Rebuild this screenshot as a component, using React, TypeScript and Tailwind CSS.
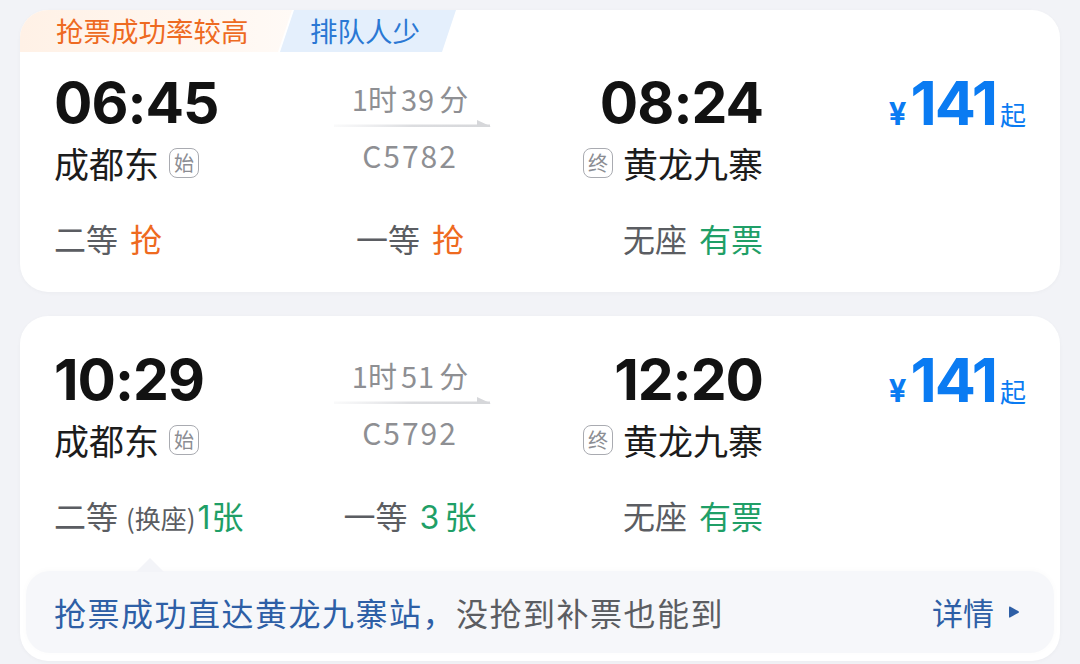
import React from 'react';

const CJK = "font-['Noto_Sans_CJK_SC',_'Noto_Sans',_sans-serif]";
const NUM = "font-['Inter',_'Noto_Sans_CJK_SC',_sans-serif]";

type Seat = { label: string; note?: string; num?: string; value: string; tone: 'orange' | 'green' };

type Train = {
  depart: string;
  arrive: string;
  from: string;
  to: string;
  duration: [string, string];
  code: string;
  price: string;
  seats: Seat[];
};

const TRAINS: Train[] = [
  {
    depart: '06:45',
    arrive: '08:24',
    from: '成都东',
    to: '黄龙九寨',
    duration: ['1', '39'],
    code: 'C5782',
    price: '141',
    seats: [
      { label: '二等', value: '抢', tone: 'orange' },
      { label: '一等', value: '抢', tone: 'orange' },
      { label: '无座', value: '有票', tone: 'green' },
    ],
  },
  {
    depart: '10:29',
    arrive: '12:20',
    from: '成都东',
    to: '黄龙九寨',
    duration: ['1', '51'],
    code: 'C5792',
    price: '141',
    seats: [
      { label: '二等', note: '(换座)', num: '1', value: '张', tone: 'green' },
      { label: '一等', num: '3', value: '张', tone: 'green' },
      { label: '无座', value: '有票', tone: 'green' },
    ],
  },
];

const Badge = ({ ch }: { ch: string }) => (
  <span className={`${CJK} inline-flex h-[30px] w-[30px] items-center justify-center rounded-[8px] border-[1.5px] border-[#a9abb1] text-[20px] leading-none text-[#8b8d93]`}>
    {ch}
  </span>
);

const Arrow = () => (
  <svg width="158" height="10" viewBox="0 0 158 10" className="block">
    <defs>
      <linearGradient id="arr" x1="0" x2="1" y1="0" y2="0">
        <stop offset="0" stopColor="#e4e5e8" stopOpacity="0.2" />
        <stop offset="0.5" stopColor="#dcdde0" />
        <stop offset="1" stopColor="#d6d7da" />
      </linearGradient>
    </defs>
    <rect x="0" y="6.5" width="156" height="2.5" fill="url(#arr)" />
    <path d="M143 2 L157 8.5 L143 8.5 Z" fill="#d6d7da" />
  </svg>
);

const SeatCell = ({ seat, align }: { seat: Seat; align: string }) => (
  <div className={`flex items-baseline ${align} ${CJK} text-[32px] leading-[40px] text-[#5b5d62]`}>
    <span>{seat.label}</span>
    {seat.note ? (
      <span className="ml-[8px] text-[26px] text-[#5b5d62]">{seat.note}</span>
    ) : (
      <span className="w-[12px]" />
    )}
    <span className={seat.tone === 'orange' ? 'text-[#ee6a1f]' : 'text-[#1f9f67]'}>
      {seat.num && <span className={`${NUM} ${seat.note ? 'ml-[2px] mr-[1px]' : 'mr-[5px]'}`}>{seat.num}</span>}
      {seat.value}
    </span>
  </div>
);

const TrainBody = ({ t }: { t: Train }) => (
  <div className="px-[34px]">
    <div className="flex">
      <div className="w-[276px]">
        <div className={`${NUM} h-[62px] text-[57px] font-bold leading-[62px] tracking-[-1px] text-[#121212]`}>{t.depart}</div>
        <div className="mt-[9px] flex h-[40px] items-center gap-[10px]">
          <span className={`${CJK} text-[35px] leading-[40px] text-[#1c1c1c]`}>{t.from}</span>
          <Badge ch="始" />
        </div>
      </div>
      <div className="flex w-[160px] flex-col items-center">
        <div className={`${CJK} mt-[7px] h-[38px] text-[29px] leading-[38px] text-[#8e8f93]`}>
          {t.duration[0]}时<span className="ml-[4px] tracking-[1px]">{t.duration[1]}</span>
          <span className="ml-[4px]">分</span>
        </div>
        <div className="mt-[1px] ml-[6px]">
          <Arrow />
        </div>
        <div className={`${CJK} mt-[9px] text-[30px] leading-[36px] tracking-[2px] text-[#8e8f93]`}>{t.code}</div>
      </div>
      <div className="flex w-[273px] flex-col items-end">
        <div className={`${NUM} h-[62px] text-[57px] font-bold leading-[62px] tracking-[-1px] text-[#121212]`}>{t.arrive}</div>
        <div className="mt-[9px] flex h-[40px] items-center gap-[10px]">
          <Badge ch="终" />
          <span className={`${CJK} text-[35px] leading-[40px] text-[#1c1c1c]`}>{t.to}</span>
        </div>
      </div>
      <div className="flex flex-1 items-start justify-end">
        <div className="flex h-[62px] items-baseline text-[#0a7bf2]">
          <span className={`${NUM} text-[31px] font-bold`}>¥</span>
          <span className={`${NUM} ml-[4px] text-[61px] font-bold leading-[62px] tracking-[-2px]`}>{t.price}</span>
          <span className={`${CJK} ml-[4px] text-[26px]`}>起</span>
        </div>
      </div>
    </div>
    <div className="mt-[35px] flex">
      <div className="w-[276px]">
        <SeatCell seat={t.seats[0]} align="justify-start" />
      </div>
      <div className="w-[160px]">
        <SeatCell seat={t.seats[1]} align="justify-center" />
      </div>
      <div className="w-[273px]">
        <SeatCell seat={t.seats[2]} align="justify-end" />
      </div>
    </div>
  </div>
);

export default function App() {
  return (
    <div className="h-[664px] w-[1080px] overflow-hidden bg-[#f2f3f7]">
      <div className="flex flex-col gap-[24px] px-[20px] pt-[10px]">
        {/* first train, with tags */}
        <div className="overflow-hidden rounded-[28px] bg-white pb-[34px] shadow-[0_1px_4px_rgba(0,0,0,0.03)]">
          <div className="flex h-[42px]">
            <div className={`${CJK} flex w-[272px] items-center bg-gradient-to-r from-[#fff1e6] to-[#fffaf6] pl-[36px] text-[27.5px] text-[#ee6a22] [clip-path:polygon(0_0,100%_0,calc(100%-14px)_100%,0_100%)]`}>
              抢票成功率较高
            </div>
            <div className={`${CJK} ml-[-12px] flex w-[176px] items-center bg-[#e4effc] pl-[30px] text-[27.5px] text-[#2a78d4] [clip-path:polygon(14px_0,100%_0,calc(100%-14px)_100%,0_100%)]`}>
              排队人少
            </div>
          </div>
          <div className="pt-[20px]">
            <TrainBody t={TRAINS[0]} />
          </div>
        </div>

        {/* second train, with tip */}
        <div className="rounded-[28px] bg-white pb-[8px] pt-[33px] shadow-[0_1px_4px_rgba(0,0,0,0.03)]">
          <TrainBody t={TRAINS[1]} />
          <div className="relative mx-[6px] mt-[33px] flex h-[82px] items-center justify-between rounded-[24px] bg-[#f6f7fa] pl-[28px] pr-[34px] shadow-[0_-1px_6px_rgba(0,0,0,0.025)]">
            <span className="absolute left-[110px] top-[-13px] h-0 w-0 border-x-[14px] border-b-[14px] border-x-transparent border-b-[#f3f4f8]" />
            <div className={`${CJK} text-[32px] tracking-[1.5px] text-[#5b5d62]`}>
              <span className="text-[#2e5fa6]">抢票成功直达黄龙九寨站，</span>没抢到补票也能到
            </div>
            <div className={`${CJK} flex items-center gap-[14px] text-[31px] text-[#2e5fa6]`}>
              详情
              <svg width="12" height="14" viewBox="0 0 12 14">
                <path d="M2 1.5 Q1 1 1 2.5 V11.5 Q1 13 2 12.5 L10.5 7.8 Q11.5 7 10.5 6.2 Z" fill="#2e5fa6" />
              </svg>
            </div>
          </div>
        </div>
      </div>
    </div>
  );
}
